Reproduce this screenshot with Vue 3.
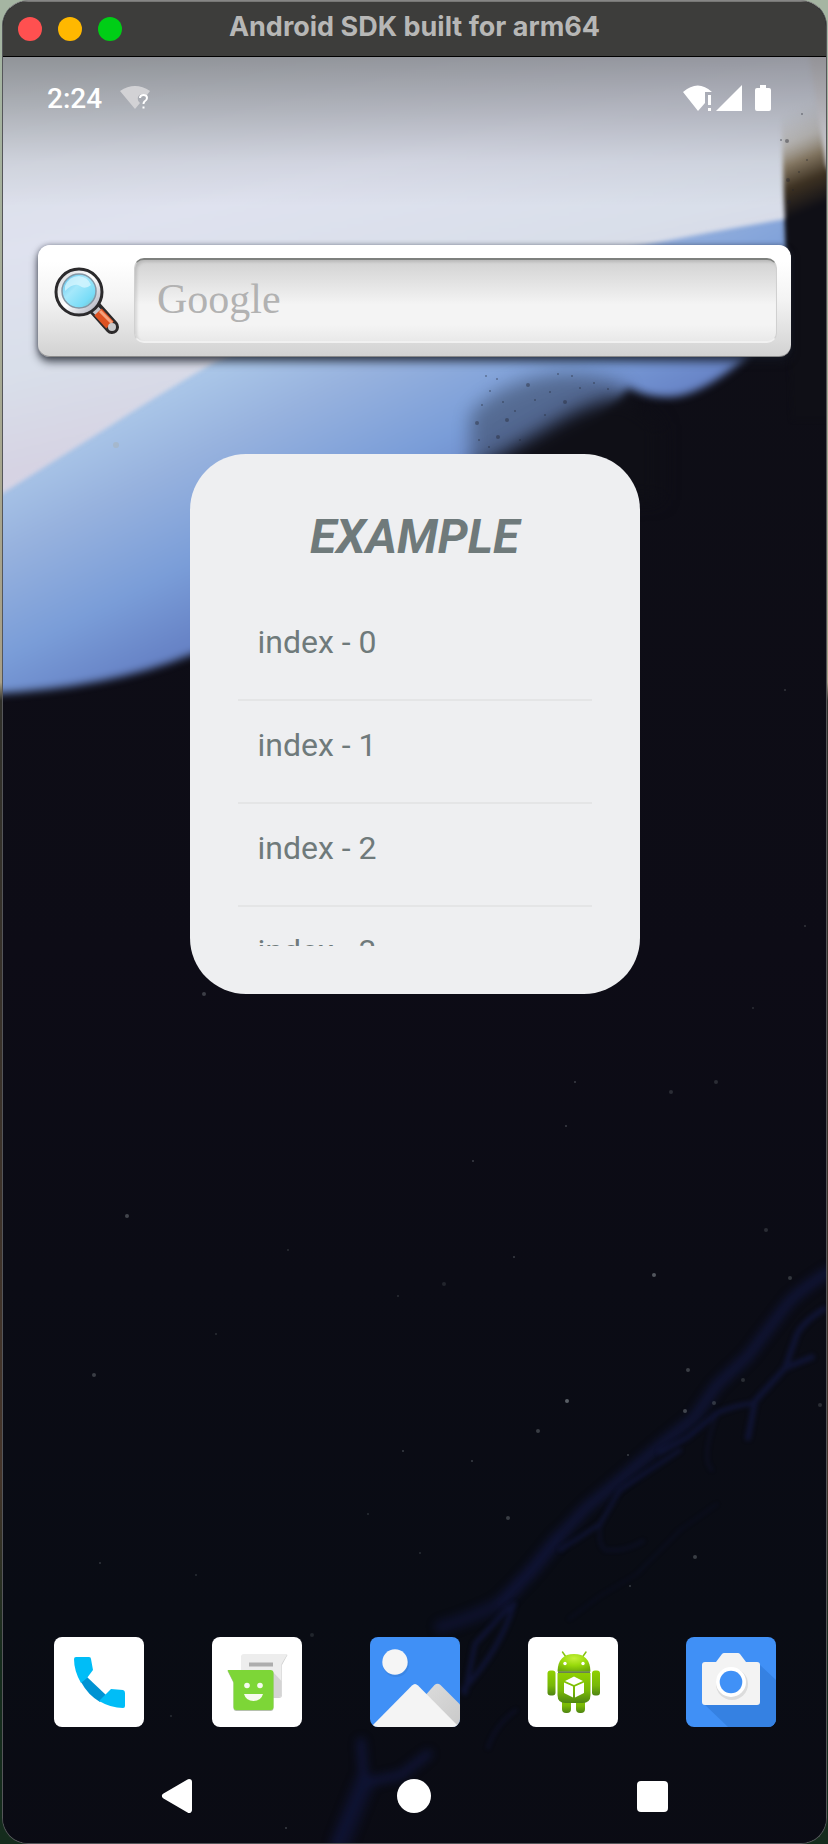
<script setup>
const windowControls = [
  { name: 'Close window', tone: 'red' },
  { name: 'Minimise window', tone: 'amber' },
  { name: 'Zoom window', tone: 'green' },
]

const items = Array.from({ length: 4 }, (_, i) => `index - ${i}`)

// x, y, radius, opacity
const stars = [
  [116, 445, 3, 0.5], [127, 1216, 2, 0.35], [94, 1375, 2, 0.3], [204, 994, 2, 0.3],
  [654, 1275, 2, 0.45], [567, 1401, 2, 0.5], [538, 1431, 2, 0.3], [444, 1284, 2, 0.15],
  [514, 1257, 1, 0.3], [688, 1370, 2, 0.3], [685, 1411, 2, 0.35], [714, 1403, 2, 0.25],
  [790, 1278, 2, 0.25], [766, 1230, 2, 0.2], [508, 1518, 2, 0.3], [695, 1557, 2, 0.3],
  [630, 1586, 1, 0.3], [403, 1451, 1, 0.3], [472, 1461, 1, 0.3], [628, 1455, 1, 0.3],
  [716, 1082, 2, 0.2], [671, 1092, 2, 0.2], [575, 1082, 1, 0.3], [566, 1126, 1, 0.3],
  [473, 1161, 1, 0.3], [820, 1405, 2, 0.2], [743, 1380, 2, 0.2], [312, 1635, 2, 0.15],
  [286, 1828, 1, 0.3], [171, 1716, 1, 0.2], [100, 1563, 1, 0.25], [196, 1575, 1, 0.2],
  [398, 1296, 1, 0.2], [216, 1334, 1, 0.2], [288, 1250, 1, 0.2], [805, 926, 1, 0.25],
  [785, 690, 1, 0.25], [753, 1008, 1, 0.2], [420, 1553, 1, 0.2], [368, 1514, 1, 0.2],
]

const specks = [
  [787, 141, 2], [802, 114, 1], [528, 385, 2], [507, 420, 2], [477, 423, 2],
  [558, 374, 1], [565, 402, 2], [490, 391, 1], [545, 415, 1], [572, 376, 1],
  [520, 440, 1], [498, 437, 2], [788, 180, 2], [793, 190, 1], [799, 172, 1],
  [807, 160, 1], [789, 202, 2], [486, 376, 1], [608, 389, 1], [781, 140, 1],
  [482, 405, 1], [503, 402, 1], [515, 411, 1], [535, 400, 1], [550, 392, 1],
  [497, 379, 1], [580, 388, 1], [594, 383, 1], [489, 447, 1], [479, 440, 1],
]
</script>

<template>
  <div class="desktop">
    <main class="window">
      <header class="titlebar">
        <div class="lights">
          <button v-for="c in windowControls" :key="c.tone" type="button" class="light" :class="c.tone" :aria-label="c.name"></button>
        </div>
        <h1 class="window-title">Android SDK built for arm64</h1>
      </header>

      <div class="screen">
        <svg class="wallpaper" viewBox="3 57 823 1786" preserveAspectRatio="xMidYMid slice" aria-hidden="true">
          <defs>
            <linearGradient id="night" x1="0" y1="0" x2="0" y2="1">
              <stop offset="0" stop-color="#0f0f16" />
              <stop offset="0.5" stop-color="#0d0c16" />
              <stop offset="0.85" stop-color="#090c14" />
              <stop offset="1" stop-color="#0b0b14" />
            </linearGradient>
            <linearGradient id="blue" gradientUnits="userSpaceOnUse" x1="190" y1="380" x2="295" y2="590">
              <stop offset="0" stop-color="#aac6e8" />
              <stop offset="0.3" stop-color="#97b2de" />
              <stop offset="0.7" stop-color="#7a9dd8" />
              <stop offset="1" stop-color="#6783c6" />
            </linearGradient>
            <linearGradient id="pale" gradientUnits="userSpaceOnUse" x1="60" y1="60" x2="150" y2="440">
              <stop offset="0" stop-color="#d8dde4" />
              <stop offset="0.45" stop-color="#dfe2ef" />
              <stop offset="0.75" stop-color="#d9dfea" />
              <stop offset="1" stop-color="#d6d3e3" />
            </linearGradient>
            <linearGradient id="burnt" gradientUnits="userSpaceOnUse" x1="786" y1="112" x2="824" y2="204">
              <stop offset="0" stop-color="#cdcbca" stop-opacity="0" />
              <stop offset="0.3" stop-color="#bfbab2" stop-opacity="0.7" />
              <stop offset="0.5" stop-color="#8c7e68" />
              <stop offset="0.72" stop-color="#3f3323" />
              <stop offset="1" stop-color="#0f0f16" />
            </linearGradient>
            <linearGradient id="scrim" x1="0" y1="0" x2="0" y2="1">
              <stop offset="0" stop-color="#000" stop-opacity="0.33" />
              <stop offset="0.35" stop-color="#000" stop-opacity="0.2" />
              <stop offset="0.7" stop-color="#000" stop-opacity="0.06" />
              <stop offset="1" stop-color="#000" stop-opacity="0" />
            </linearGradient>
            <filter id="soft2" x="-20%" y="-20%" width="140%" height="140%" color-interpolation-filters="sRGB"><feGaussianBlur stdDeviation="2" /></filter>
            <filter id="soft4" x="-20%" y="-20%" width="140%" height="140%" color-interpolation-filters="sRGB"><feGaussianBlur stdDeviation="4" /></filter>
            <filter id="soft9" x="-40%" y="-40%" width="180%" height="180%" color-interpolation-filters="sRGB"><feGaussianBlur stdDeviation="9" /></filter>
          </defs>
          <rect x="-400" y="0" width="1700" height="1900" fill="url(#night)" />
          <path d="M-40 40H787L789 270Q785 310 745 358Q700 397 668 397Q645 397 628 388L560 470L380 570Q280 630 190 655Q100 692-40 695Z" fill="url(#blue)" filter="url(#soft4)" />
          <path d="M470 480V415Q500 380 560 374Q600 372 628 388Q630 420 600 480Z" fill="#20242e" opacity="0.4" filter="url(#soft9)" />
          <path d="M472 500V470Q520 444 556 422Q590 402 618 398Q640 406 660 425V500Z" fill="#0f0f16" filter="url(#soft9)" />
          <path d="M-40 40H840V206L786 219Q720 230 645 245Q420 280 215 362Q150 400 110 426L3 493L-40 520Z" fill="url(#pale)" filter="url(#soft2)" />
          <path d="M779 40H860V420H792Q787 250 784 200Z" fill="url(#burnt)" filter="url(#soft2)" />
          <path d="M808 50H840V190L826 165Z" fill="#dcdbe2" filter="url(#soft2)" />
          <circle v-for="(s, i) in specks" :key="'k' + i" :cx="s[0]" :cy="s[1]" :r="s[2]" fill="#20222c" opacity="0.4" />
          <g fill="none" stroke="#11163a" stroke-linecap="round" stroke-linejoin="round" filter="url(#soft4)" opacity="0.85">
            <path d="M830 1271Q800 1290 788 1303L748 1356L717 1385L694 1418L664 1442L616 1483L586 1508L559 1537L532 1570L502 1602" stroke-width="11" />
            <path d="M559 1537L532 1570L502 1602Q480 1615 441 1627" stroke-width="14" opacity="0.7" />
            <path d="M428 1754L401 1775L364 1783L337 1845M361 1742L364 1783" stroke-width="9" />
            <path d="M364 1783L340 1845" stroke-width="22" opacity="0.6" />
          </g>
          <g fill="none" stroke="#11163a" stroke-linecap="round" stroke-linejoin="round" filter="url(#soft2)" opacity="0.8">
            <path d="M509 1607L475 1644L465 1693M514 1604Q500 1650 463 1690" stroke-width="5" />
            <path d="M812 1357L785 1368L755 1401L748 1438M824 1309Q798 1325 795 1340L785 1368" stroke-width="6" />
            <path d="M755 1403Q735 1405 717 1413L687 1438L660 1452" stroke-width="5" />
            <path d="M717 1413Q700 1460 712 1470" stroke-width="3" opacity="0.5" />
            <path d="M680 1450L620 1490L600 1524L560 1550" stroke-width="4" />
            <path d="M600 1524Q598 1547 606 1550Q625 1552 643 1541" stroke-width="3" opacity="0.6" />
            <path d="M717 1504L680 1530L637 1574L600 1596L569 1619" stroke-width="2" opacity="0.5" />
            <path d="M516 1710Q495 1725 488 1748" stroke-width="3" opacity="0.6" />
          </g>
          <circle v-for="(s, i) in stars" :key="'s' + i" :cx="s[0]" :cy="s[1]" :r="s[2]" fill="#a8b2b5" :opacity="s[3]" />
          <rect x="-400" y="57" width="1700" height="150" fill="url(#scrim)" />
        </svg>

        <div class="statusbar">
          <time class="clock">2:24</time>
          <svg class="status-icon" width="30" height="24" viewBox="0 0 30 24" role="img" aria-label="Network unavailable">
            <path d="M0 5Q15-5 30 5L27 9Q20 6 18 11Q17 15 20 17L15 23Z" fill="#d2d2d5" />
            <path d="M20 12Q20 9 23.500 9Q27 9 27 12Q27 14 24.500 15.500Q23.500 16.500 23.500 18M23.500 20.500V22.500" fill="none" stroke="#fff" stroke-width="2" />
          </svg>
          <span class="status-right">
            <svg width="29" height="26" viewBox="0 0 29 26" role="img" aria-label="Wi-Fi limited">
              <path d="M0 7Q15-6 29 7H22V18L15 26Z" fill="#fff" />
              <path d="M25 10H28V20H25ZM25 23H28V26H25Z" fill="#fff" />
            </svg>
            <svg width="26" height="26" viewBox="0 0 26 26" role="img" aria-label="Mobile signal"><path d="M26 0V26H0Z" fill="#fff" /></svg>
            <svg class="battery" width="16" height="26" viewBox="0 0 16 26" role="img" aria-label="Battery full"><path d="M5 0H11V3H14Q16 3 16 5V24Q16 26 14 26H2Q0 26 0 24V5Q0 3 2 3H5Z" fill="#fff" /></svg>
          </span>
        </div>

        <form class="search" role="search" @submit.prevent>
          <button class="search-button" type="submit" aria-label="Search">
            <svg width="66" height="70" viewBox="0 0 66 70" aria-hidden="true">
              <defs>
                <linearGradient id="lens" x1="0" y1="0" x2="1" y2="1">
                  <stop offset="0" stop-color="#55bdea" /><stop offset="0.4" stop-color="#a5e8fb" /><stop offset="0.75" stop-color="#78dcf7" /><stop offset="1" stop-color="#79b9b8" />
                </linearGradient>
                <linearGradient id="rim" x1="0" y1="0" x2="1" y2="1">
                  <stop offset="0" stop-color="#d5d5d8" /><stop offset="0.5" stop-color="#fff" /><stop offset="1" stop-color="#9c9fae" />
                </linearGradient>
              </defs>
              <path d="M41 42L58 61" stroke="#2c2a2b" stroke-width="14" stroke-linecap="round" />
              <path d="M39 41L45 47" stroke="#c4c4c8" stroke-width="8" />
              <path d="M44 46L56 59" stroke="#dd5222" stroke-width="10" />
              <path d="M46 45L58 57" stroke="#f6a17c" stroke-width="3" />
              <circle cx="58" cy="61" r="4" fill="#c8c8ca" />
              <circle cx="25" cy="26" r="23" fill="url(#rim)" stroke="#2b2a2c" stroke-width="3" />
              <circle cx="25" cy="25" r="17" fill="url(#lens)" stroke="#8497a5" stroke-width="1.500" />
              <path d="M11 20Q15 10 25 10Q34 11 37 19Q31 24 26 20Q20 16 11 25Z" fill="#d9f7ff" opacity="0.75" />
            </svg>
          </button>
          <input class="search-input" type="search" placeholder="Google" aria-label="Google search" />
        </form>

        <section class="widget" aria-labelledby="widget-title">
          <h2 id="widget-title" class="widget-title">EXAMPLE</h2>
          <ul class="widget-list">
            <li v-for="item in items" :key="item" class="widget-item">{{ item }}</li>
          </ul>
        </section>

        <nav class="dock" aria-label="Favourite apps">
          <button class="app" type="button" aria-label="Phone">
            <svg viewBox="0 0 90 90" aria-hidden="true">
              <path d="M27 45L33 40L52 58L46 65Q34 58 27 45Z" fill="#0093d3" />
              <path d="M22 20H35Q37 20 37 22L39 33L33 41L27 46Q20 34 20 22Q20 20 22 20Z" fill="#00bdf7" />
              <path d="M51 58L57 52L69 53Q71 53.500 71 56V69Q71 71 69 71Q57 71 45 64Z" fill="#00bdf7" />
            </svg>
          </button>
          <button class="app" type="button" aria-label="Messages">
            <svg viewBox="0 0 90 90" aria-hidden="true">
              <path d="M32 18H75.500L70 28V58Q70 61 67 61H32Q29 61 29 58V21Q29 18 32 18Z" fill="#d2d2d2" />
              <path d="M32 17H75.500L69.500 27V57Q69.500 60 66.500 60H32Q29 60 29 57V20Q29 17 32 17Z" fill="#ededed" />
              <path d="M61 35L69.500 44V57Q69.500 60 66.500 60H61Z" fill="#d4d4d4" />
              <path d="M37 25.500H61V29.500H37Z" fill="#adadad" />
              <path d="M15.500 34H59Q61.500 34 61.500 37V71Q61.500 74 58.500 74H24.500Q21.500 74 21.500 71V46Z" fill="#b5c0ad" />
              <path d="M15.500 33H58.500Q61.500 33 61.500 36V70Q61.500 73 58.500 73H24.500Q21.500 73 21.500 70V45Z" fill="#7dd637" />
              <circle cx="35" cy="48.500" r="2.800" fill="#f5faef" /><circle cx="48" cy="48.500" r="2.800" fill="#f5faef" />
              <path d="M32 57H51Q49 64 41.500 64Q34 64 32 57Z" fill="#f7fbef" />
            </svg>
          </button>
          <button class="app app-blue" type="button" aria-label="Gallery">
            <svg viewBox="0 0 90 90" aria-hidden="true">
              <defs><linearGradient id="slope" x1="0" y1="0" x2="1" y2="1"><stop offset="0" stop-color="#dedede" /><stop offset="1" stop-color="#c9c9c9" /></linearGradient></defs>
              <circle cx="26" cy="27" r="13" fill="#326fbc" opacity="0.3" />
              <circle cx="25" cy="25" r="12.700" fill="#f5f5f5" />
              <path d="M45 70L64.500 48Q67.500 45.500 70.500 48L90 67.500V90H60Z" fill="url(#slope)" />
              <path d="M1 90L42 48.500Q45 45.500 48 48.500L89 90Z" fill="#f4f4f4" />
            </svg>
          </button>
          <button class="app" type="button" aria-label="Android API demos">
            <svg viewBox="0 0 90 90" aria-hidden="true">
              <defs>
                <linearGradient id="droid" x1="0" y1="0" x2="0" y2="1"><stop offset="0" stop-color="#8fd000" /><stop offset="0.6" stop-color="#78b808" /><stop offset="1" stop-color="#4e8412" /></linearGradient>
                <radialGradient id="dome" cx="0.500" cy="0.250" r="0.800"><stop offset="0" stop-color="#c4f03a" /><stop offset="0.5" stop-color="#98d90b" /><stop offset="1" stop-color="#6aa80a" /></radialGradient>
              </defs>
              <path d="M34.500 15L38 20M58 15L54.500 20" stroke="#86c411" stroke-width="1.500" stroke-linecap="round" />
              <rect x="34" y="58" width="9" height="18" rx="4" fill="url(#droid)" />
              <rect x="48" y="58" width="9" height="18" rx="4" fill="url(#droid)" />
              <rect x="19.500" y="33.500" width="8" height="25" rx="3" fill="url(#droid)" />
              <rect x="64" y="33.500" width="8" height="25" rx="3" fill="url(#droid)" />
              <path d="M29.500 36H62.500V58Q62.500 66 54.500 66H37.500Q29.500 66 29.500 58Z" fill="url(#droid)" />
              <path d="M29.500 34.500Q30 17 46 17Q62 17 62.500 34.500Z" fill="url(#dome)" />
              <path d="M30 35.200H62" stroke="#385814" stroke-width="1.300" />
              <circle cx="37" cy="26.500" r="1.700" fill="#fff" /><circle cx="55" cy="26.500" r="1.700" fill="#fff" />
              <path d="M46 39.500L55 44L46 48L37 44ZM36 45.500L45 49.500V60.500L36 56ZM56 45.500L47 49.500V60.500L56 56Z" fill="#fff" />
            </svg>
          </button>
          <button class="app app-blue" type="button" aria-label="Camera">
            <svg viewBox="0 0 90 90" aria-hidden="true">
              <path d="M73 27L90 43V90H42L17 66Z" fill="#3581e2" />
              <path d="M19 25H30L36 17Q37 16 38 16H52Q53 16 54 17L60 25H71Q74 25 74 28V65Q74 68 71 68H19Q16 68 16 65V28Q16 25 19 25Z" fill="#f3f3f3" />
              <circle cx="46" cy="47" r="16" fill="#dcdcdc" />
              <circle cx="45" cy="45" r="15" fill="#fff" />
              <circle cx="45" cy="45" r="11.300" fill="#4091f7" />
            </svg>
          </button>
        </nav>

        <nav class="navbar" aria-label="System navigation">
          <button type="button" class="nav-button" aria-label="Back"><svg width="32" height="34" viewBox="0 0 32 34" aria-hidden="true"><path d="M28 3L4 17L28 31Z" fill="#fff" stroke="#fff" stroke-width="6" stroke-linejoin="round" /></svg></button>
          <button type="button" class="nav-button" aria-label="Home"><svg width="34" height="34" viewBox="0 0 34 34" aria-hidden="true"><circle cx="17" cy="17" r="17" fill="#fff" /></svg></button>
          <button type="button" class="nav-button" aria-label="Overview"><svg width="31" height="31" viewBox="0 0 31 31" aria-hidden="true"><rect width="31" height="31" rx="4" fill="#fff" /></svg></button>
        </nav>
      </div>
    </main>
  </div>
</template>

<style>
html,
body {
  margin: 0;
  background: #18231b;
}
</style>

<style scoped>
* {
  box-sizing: border-box;
}

.desktop {
  min-height: 100vh;
  display: flex;
  padding: 0 1px 0 2px;
  background: linear-gradient(#a5b5a2 0, #a5b5a2 60px, #a89f86 37%, #30302a 38%, #45352a 80%, #152c1d 90%);
  font-family: Roboto, "Liberation Sans", sans-serif;
}

button {
  appearance: none;
  margin: 0;
  padding: 0;
  border: 0;
  background: none;
  cursor: pointer;
}

svg {
  display: block;
}

.window {
  flex: 1;
  min-width: 0;
  display: flex;
  flex-direction: column;
  overflow: hidden;
  border: 1px solid #55565a;
  border-top-color: #868685;
  border-radius: 26px;
  background: #0c0c14;
}

.titlebar {
  display: grid;
  grid-template-columns: 1fr auto 1fr;
  align-items: center;
  height: 56px;
  padding: 0 15px;
  border-top: 1px solid #777775;
  border-bottom: 1px solid #000;
  background: #3d3d3b;
}

.lights {
  display: flex;
  gap: 16px;
}

.light {
  width: 24px;
  height: 24px;
  border-radius: 50%;
}

.red { background: #ff5050; }
.amber { background: #ffb800; }
.green { background: #00ce16; }

.window-title {
  margin: 0;
  padding-bottom: 4px;
  font-family: Inter, "Liberation Sans", sans-serif;
  font-size: 27px;
  font-weight: 700;
  line-height: 32px;
  color: #b7b7b6;
}

.screen {
  flex: 1;
  position: relative;
  isolation: isolate;
  display: flex;
  flex-direction: column;
}

.wallpaper {
  position: absolute;
  inset: 0;
  z-index: -1;
  width: 100%;
  height: 100%;
}

.statusbar {
  display: flex;
  align-items: center;
  height: 82px;
  padding: 0 55px 0 44px;
  color: #fff;
}

.clock {
  padding-top: 2px;
  font-size: 28px;
  font-weight: 500;
  line-height: 32px;
}

.status-icon {
  margin-left: 18px;
}

.status-right {
  display: flex;
  align-items: center;
  gap: 4px;
  margin-left: auto;
}

.battery {
  margin-left: 9px;
}

.search {
  display: flex;
  align-items: center;
  height: 112px;
  margin: 106px 35px 0;
  padding: 14px;
  border-bottom: 1px solid #8b8b8b;
  border-radius: 12px;
  background: linear-gradient(#fff 15%, #f3f3f3 50%, #d2d2d2);
  box-shadow: 0 5px 9px rgba(20, 24, 34, 0.7), 0 0 5px rgba(40, 44, 64, 0.4);
}

.search-button {
  margin: 0 14px 0 2px;
}

.search-input {
  flex: 1;
  min-width: 0;
  height: 85px;
  padding: 0 22px 4px;
  border: 1px solid #d0d0d0;
  border-top: 2px solid #7e807e;
  border-bottom: 2px solid #f1f1f1;
  border-radius: 10px;
  outline: 0;
  background: linear-gradient(#d2d2d2, #e1e1e1 25%, #f4f4f4 55%, #f4f4f4 80%, #e9e9e9);
  box-shadow: inset 2px 2px 3px rgba(0, 0, 0, 0.12);
  font-family: "Liberation Serif", serif;
  font-size: 42px;
  color: #555;
}

.search-input::placeholder {
  color: #b2b2b2;
  opacity: 1;
}

.widget {
  align-self: center;
  width: 450px;
  max-width: 90%;
  margin-top: 97px;
  padding: 48px;
  border-radius: 56px;
  background: #eeeff1;
  color: #6f7a7b;
}

.widget-title {
  margin: 0 0 26px;
  font-size: 48px;
  font-style: italic;
  font-weight: 700;
  line-height: 70px;
  text-align: center;
}

.widget-list {
  height: 348px;
  margin: 0;
  padding: 0;
  overflow-y: auto;
  scrollbar-width: none;
  list-style: none;
}

.widget-item {
  padding: 24px 20px 37px;
  border-bottom: 2px solid #e4e5e6;
  font-size: 32px;
  line-height: 40px;
}

.dock {
  display: flex;
  justify-content: space-between;
  margin-top: auto;
  padding: 0 50px 0 51px;
}

.app {
  width: 90px;
  height: 90px;
  overflow: hidden;
  border-radius: 8px;
  background: #fff;
}

.app-blue {
  background: #4090f6;
}

.navbar {
  display: grid;
  grid-template-columns: repeat(3, 1fr);
  height: 116px;
  padding: 24px 55px 0;
}

.nav-button {
  justify-self: center;
  display: flex;
  align-items: center;
  height: 90px;
}
</style>
